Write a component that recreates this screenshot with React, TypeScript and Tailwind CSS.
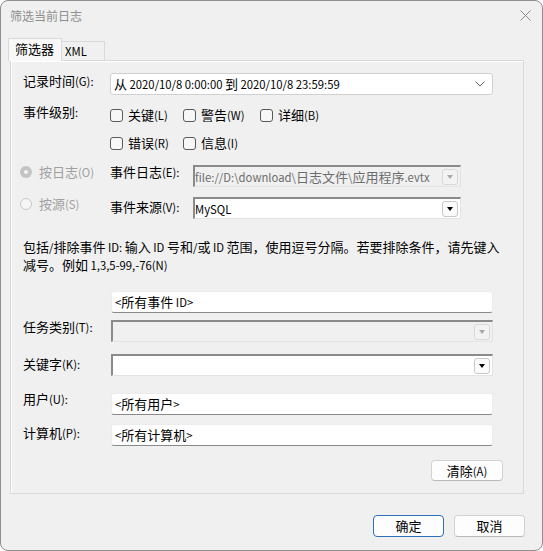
import React from "react";

const CJK = /[\u3000-\u303f\u3400-\u9fff\uff00-\uffef]/;

function T({ s }: { s: string }) {
  const parts: { t: string; c: boolean }[] = [];
  for (const ch of s) {
    const c = CJK.test(ch);
    const last = parts[parts.length - 1];
    if (last && last.c === c) last.t += ch;
    else parts.push({ t: ch, c });
  }
  return (
    <>
      {parts.map((p, i) => (
        <span key={i} className={p.c ? "text-[13px]" : "text-[11.3px]"}>
          {p.t}
        </span>
      ))}
    </>
  );
}

function Checkbox({ label, w }: { label: string; w: string }) {
  return (
    <div className={`flex items-center ${w}`}>
      <div className="w-[13px] h-[13px] rounded-[3px] border border-[#5a5a5a] bg-[#f7f7f7]" />
      <span className="ml-[5px] leading-[16px] whitespace-nowrap">
        <T s={label} />
      </span>
    </div>
  );
}

function DropBtn({ disabled }: { disabled?: boolean }) {
  return (
    <div
      className={`shrink-0 w-[16px] h-[16px] rounded-[3px] border flex items-center justify-center ${
        disabled ? "border-[#d8d8d8] bg-[#f3f3f3]" : "border-[#c8c8c8] bg-[#fbfbfb]"
      }`}
    >
      <div
        className={`w-0 h-0 border-l-[3.5px] border-r-[3.5px] border-t-[4px] border-l-transparent border-r-transparent ${
          disabled ? "border-t-[#a8a8a8]" : "border-t-black"
        }`}
      />
    </div>
  );
}

function Sunken({ w, disabled, text }: { w: string; disabled?: boolean; text?: string }) {
  return (
    <div
      className={`${w} h-[22px] flex items-center justify-between border-t-2 border-l-2 border-b border-r border-t-[#8a8a8a] border-l-[#8a8a8a] border-b-[#e3e3e3] border-r-[#e3e3e3] pr-[2px] ${
        disabled ? "bg-[#f0f0f0] text-[#6d6d6d]" : "bg-white text-black"
      }`}
    >
      <span className="leading-[16px] whitespace-nowrap shrink-0">{text ? <T s={text} /> : null}</span>
      <DropBtn disabled={disabled} />
    </div>
  );
}

function TextBox({ text }: { text?: string }) {
  return (
    <div className="w-[382px] h-[22px] bg-white border border-[#ececec] border-b-[#8a8a8a] rounded-[3px] flex items-center pl-[3px]">
      <span className="leading-[16px] whitespace-nowrap">{text ? <T s={text} /> : null}</span>
    </div>
  );
}

function Label({ s, w, mt }: { s: string; w: string; mt: string }) {
  return (
    <span className={`${w} ${mt} leading-[16px] whitespace-nowrap shrink-0`}>
      <T s={s} />
    </span>
  );
}

function Button({ label, w, primary }: { label: string; w: string; primary?: boolean }) {
  return (
    <div
      className={`${w} h-[22px] rounded-[4px] border bg-[#fdfdfd] flex items-center justify-center leading-[16px] ${
        primary ? "border-[#2d6fb8]" : "border-[#d2d2d2] border-b-[#b9b9b9]"
      }`}
    >
      <T s={label} />
    </div>
  );
}

export default function App() {
  return (
    <div className="w-[543px] h-[551px] bg-[#f0f0f0] border border-[#8f8f8f] rounded-[8px] overflow-hidden flex flex-col text-[12px] text-black font-['Noto_Sans_CJK_SC',sans-serif]">
      {/* Title bar */}
      <div className="h-[29px] flex items-center justify-between pl-[9px] pr-[11px]">
        <span className="text-[#8e8e8e] leading-[16px]">筛选当前日志</span>
        <svg width="11" height="11" viewBox="0 0 11 11">
          <path d="M0.5 0.5L10.5 10.5M10.5 0.5L0.5 10.5" stroke="#8a8a8a" strokeWidth="1" />
        </svg>
      </div>

      {/* Tabs */}
      <div className="mt-[8px] h-[22px] flex items-end pl-[7px]">
        <div className="relative z-10 -mb-px h-[23px] w-[54px] bg-[#f8f8f8] border border-b-0 border-[#d9d9d9] pl-[6px] pt-[2px] leading-[16px]">
          <T s="筛选器" />
        </div>
        <div className="h-[19px] w-[43px] bg-[#f0f0f0] border border-l-0 border-b-0 border-[#d9d9d9] pl-[3px] pt-[1px] leading-[16px]">
          <T s="XML" />
        </div>
      </div>

      {/* Panel */}
      <div className="ml-[9px] w-[514px] h-[434px] border border-[#d9d9d9] shadow-[inset_1px_1px_0_#ffffff] bg-[#f0f0f0] flex flex-col pl-[12px]">
        {/* 记录时间 */}
        <div className="mt-[12px] flex items-start">
          <Label s="记录时间(G):" w="w-[87px]" mt="mt-[0px]" />
          <div className="w-[383px] h-[22px] bg-white border border-[#d0d0d0] rounded-[3px] flex items-center justify-between pl-[3px] pr-[7px]">
            <span className="leading-[16px] whitespace-nowrap">
              <T s="从 2020/10/8 0:00:00 到 2020/10/8 23:59:59" />
            </span>
            <svg width="10" height="6" viewBox="0 0 10 6">
              <path d="M0.5 0.5L5 5L9.5 0.5" stroke="#606060" strokeWidth="1" fill="none" />
            </svg>
          </div>
        </div>

        {/* 事件级别 */}
        <div className="mt-[10px] flex items-start">
          <Label s="事件级别:" w="w-[87px]" mt="mt-[-1px]" />
          <div className="h-[20px] flex items-center">
            <Checkbox label="关键(L)" w="w-[73px]" />
            <Checkbox label="警告(W)" w="w-[77px]" />
            <Checkbox label="详细(B)" w="w-[80px]" />
          </div>
        </div>
        <div className="mt-[8px] flex items-start">
          <span className="w-[87px] shrink-0" />
          <div className="h-[20px] flex items-center">
            <Checkbox label="错误(R)" w="w-[73px]" />
            <Checkbox label="信息(I)" w="w-[77px]" />
          </div>
        </div>

        {/* 事件日志 */}
        <div className="mt-[12px] -ml-[3px] flex items-start">
          <div className="w-[90px] shrink-0 flex items-center mt-[-1px] h-[16px]">
            <div className="w-[12px] h-[12px] rounded-full bg-[#c4c4c4] flex items-center justify-center">
              <div className="w-[4px] h-[4px] rounded-full bg-[#f4f4f4]" />
            </div>
            <span className="ml-[7px] leading-[16px] text-[#a0a0a0] whitespace-nowrap">
              <T s="按日志(O)" />
            </span>
          </div>
          <Label s="事件日志(E):" w="w-[83px]" mt="mt-[-1px]" />
          <Sunken w="w-[268px]" disabled text="file://D:\download\日志文件\应用程序.evtx" />
        </div>

        {/* 事件来源 */}
        <div className="mt-[10px] -ml-[3px] flex items-start">
          <div className="w-[90px] shrink-0 flex items-center mt-[-1px] h-[16px]">
            <div className="w-[12px] h-[12px] rounded-full border border-[#c8c8c8] bg-[#f6f6f6]" />
            <span className="ml-[7px] leading-[16px] text-[#a0a0a0] whitespace-nowrap">
              <T s="按源(S)" />
            </span>
          </div>
          <Label s="事件来源(V):" w="w-[83px]" mt="mt-[2px]" />
          <Sunken w="w-[268px]" text="MySQL" />
        </div>

        {/* 描述 */}
        <div className="mt-[19px] leading-[18px] whitespace-nowrap">
          <T s="包括/排除事件 ID: 输入 ID 号和/或 ID 范围，使用逗号分隔。若要排除条件，请先键入" />
          <br />
          <T s="减号。例如 1,3,5-99,-76(N)" />
        </div>

        {/* 事件 ID */}
        <div className="mt-[17px] flex items-start">
          <span className="w-[88px] shrink-0" />
          <TextBox text="<所有事件 ID>" />
        </div>

        {/* 任务类别 */}
        <div className="mt-[7px] flex items-start">
          <Label s="任务类别(T):" w="w-[88px]" mt="mt-[-1px]" />
          <Sunken w="w-[382px]" disabled />
        </div>

        {/* 关键字 */}
        <div className="mt-[12px] flex items-start">
          <Label s="关键字(K):" w="w-[88px]" mt="mt-[2px]" />
          <Sunken w="w-[382px]" />
        </div>

        {/* 用户 */}
        <div className="mt-[17px] flex items-start">
          <Label s="用户(U):" w="w-[88px]" mt="mt-[-2px]" />
          <TextBox text="<所有用户>" />
        </div>

        {/* 计算机 */}
        <div className="mt-[9px] flex items-start">
          <Label s="计算机(P):" w="w-[88px]" mt="mt-[1px]" />
          <TextBox text="<所有计算机>" />
        </div>

        {/* 清除 */}
        <div className="mt-[14px] flex justify-end pr-[20px]">
          <div className="w-[72px] h-[21px] rounded-[4px] border border-[#d2d2d2] border-b-[#b9b9b9] bg-[#fdfdfd] flex items-center justify-center leading-[16px]">
            <T s="清除(A)" />
          </div>
        </div>
      </div>

      {/* Bottom buttons */}
      <div className="mt-[21px] flex justify-end gap-[10px] pr-[17px]">
        <Button label="确定" w="w-[71px]" primary />
        <Button label="取消" w="w-[71px]" />
      </div>
    </div>
  );
}
